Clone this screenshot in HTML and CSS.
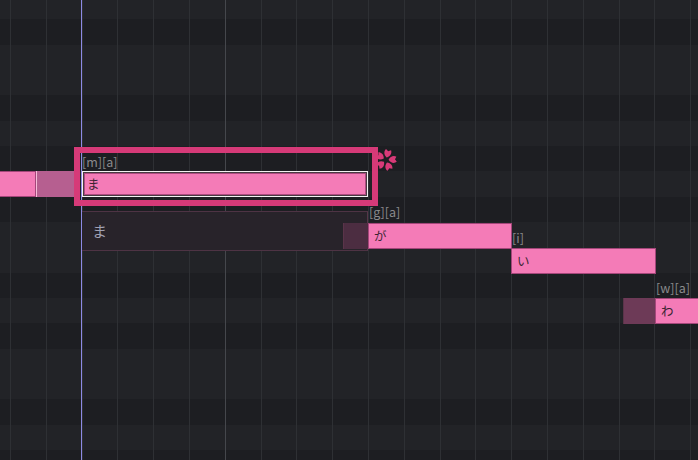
FILE: index.html
```html
<!DOCTYPE html>
<html>
<head>
<meta charset="utf-8">
<title>ピアノロール</title>
<link rel="stylesheet" href="styles.css">
</head>
<body>
<div class="roll">
	<!-- 小節線と再生位置 -->
	<div class="barline" style="left:225px"></div>
	<div class="playhead" style="left:81px"></div>

	<!-- 前のノート -->
	<div class="note" style="left:-2px;top:171px;width:38px"></div>
	<div class="overlap" style="left:36px;top:171px;width:40px"></div>

	<!-- 元のノートの影 -->
	<div class="ghost" style="left:82px;top:211px;width:286px"><span>ま</span></div>

	<!-- 選択中のノート -->
	<div class="sel">
		<div class="phoneme">[m][a]</div>
		<div class="picked"><div class="inner">ま</div></div>
	</div>
	<svg class="sakura" viewBox="-11 -11 22 22" width="22" height="22">
		<g fill="#d83a78" transform="rotate(14)">
			<path id="petal" d="M0,-2.6 C-3.6,-4.6 -4.2,-8 -2.6,-10.6 L0,-9 L2.6,-10.6 C4.2,-8 3.6,-4.6 0,-2.6Z"/>
			<use href="#petal" transform="rotate(72)"/>
			<use href="#petal" transform="rotate(144)"/>
			<use href="#petal" transform="rotate(216)"/>
			<use href="#petal" transform="rotate(288)"/>
		</g>
	</svg>

	<div class="pre" style="left:343px;top:223px;width:25px;background:#4c2d41"></div>
	<div class="phoneme free" style="left:369px;top:203px">[g][a]</div>
	<div class="note" style="left:368px;top:223px;width:144px">が</div>

	<div class="phoneme free" style="left:512px;top:229px">[i]</div>
	<div class="note" style="left:511px;top:248px;width:145px">い</div>

	<div class="pre" style="left:623px;top:298px;width:32px"></div>
	<div class="phoneme free" style="left:656px;top:279px">[w][a]</div>
	<div class="note" style="left:655px;top:298px;width:60px">わ</div>
</div>
</body>
</html>
```

FILE: styles.css
```css
*{
	margin: 0;
	padding: 0;
	box-sizing: border-box;
}
body {
	background: #1e1f23;
	font-family: "Noto Sans CJK JP", "Noto Sans", sans-serif;
}
.roll {
	width: 698px;
	height: 460px;
	position: relative;
	overflow: hidden;
	/* 縦線 + 鍵盤の行 (12行 = 304px) */
	background:
		repeating-linear-gradient(to right, #2e3034 0 1px, transparent 1px 35.8px) 10px 0 / 100% 100%,
		linear-gradient(to bottom,
			#222327 0 25.33px, #1d1e22 25.33px 50.67px,
			#222327 50.67px 101.33px, #1d1e22 101.33px 126.67px,
			#222327 126.67px 152px, #1d1e22 152px 177.33px,
			#222327 177.33px 202.67px, #1d1e22 202.67px 228px,
			#222327 228px 278.67px, #1d1e22 278.67px 304px) 0 -6px / 100% 304px repeat-y;
}
.barline {
	position: absolute;
	top: 0;
	bottom: 0;
	width: 1px;
	background: #45474c;
}
.playhead {
	position: absolute;
	top: 0;
	bottom: 0;
	width: 1px;
	background: #8d8ae4;
}
.note {
	position: absolute;
	height: 26px;
	background: #f47bb7;
	border: 1px solid #a4467a;
	padding-left: 5px;
	font-size: 12.5px;
	line-height: 23px;
	color: #3a2431;
}
.overlap {
	position: absolute;
	height: 26px;
	background: #b65f90;
	border-left: 1px solid #f6bcd8;
}
.pre {
	position: absolute;
	height: 26px;
	background: #6d3a57;
	border-left: 1px solid #5a3449;
}
.ghost {
	position: absolute;
	height: 40px;
	background: #28232a;
	border-top: 1px solid #4e3344;
	border-bottom: 1px solid #4e3344;
	border-right: 1px solid #553649;
	padding: 9px 0 0 10px;
	font-size: 15px;
	line-height: 20px;
	color: #a0a1b4;
}
.sel {
	position: absolute;
	left: 74px;
	top: 147px;
	width: 304px;
	height: 59px;
	border: 6px solid #d63a78;
}
.phoneme {
	font-size: 12.5px;
	line-height: 18px;
	color: #8a8a8c;
	padding-left: 2px;
	white-space: nowrap;
}
.phoneme.free {
	position: absolute;
	padding-left: 0;
}
.picked {
	margin-left: 2px;
	width: 286px;
	height: 26px;
	border: 1px solid #f4f0f2;
	padding: 1px;
	background: #4a3a43;
}
.inner {
	height: 100%;
	background: #f47bb7;
	border: 1px solid #ad4b80;
	padding-left: 2px;
	font-size: 12.5px;
	line-height: 20px;
	color: #3a2431;
}
.sakura {
	position: absolute;
	left: 375px;
	top: 149px;
}
```
